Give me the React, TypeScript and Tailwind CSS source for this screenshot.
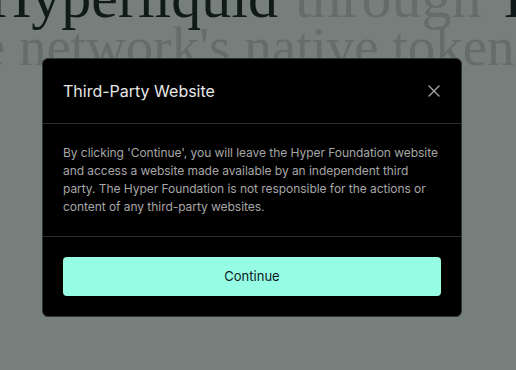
import React from "react"
import { X } from "lucide-react"

const ThirdPartyModal: React.FC = () => {
  return (
    <div className="relative h-[370px] w-[516px] overflow-hidden bg-[#777f7d]">
      {/* Page behind the overlay */}
      <div
        className="whitespace-nowrap leading-[50px]"
        style={{ fontFamily: '"Liberation Serif", "DejaVu Serif", serif' }}
      >
        <div className="-mt-[28px] -ml-[12px] text-[60px]">
          <span className="text-[#0f1a19]">Hyperliquid</span>
          <span className="ml-[17px] text-[#646d6b]">through</span>
          <span className="ml-[22px] text-[#0f1a19]">It</span>
        </div>
        <div className="-ml-[62px] text-[55px] text-[#646d6b]">the network's native token</div>
      </div>

      {/* Overlay + dialog */}
      <div className="absolute inset-0">
        <div
          className="mt-[58px] ml-[42px] w-[420px] rounded-md border border-[#333333] bg-black"
          style={{ fontFamily: 'Inter, "Liberation Sans", sans-serif' }}
        >
          <div className="flex items-center justify-between border-b border-[#2b2b2b] py-5 pr-[17px] pl-5">
            <h2 className="text-base leading-6 text-[#e8e8e8]">Third-Party Website</h2>
            <X className="h-5 w-5 text-[#a8a8a8]" strokeWidth={1.5} />
          </div>
          <div className="border-b border-[#2b2b2b] px-5 py-5">
            <p className="text-[12px] leading-[18px] tracking-[-0.05px] text-[#a6a6a6]">
              By clicking 'Continue', you will leave the Hyper Foundation website and access a
              website made available by an independent third party. The Hyper Foundation is not
              responsible for the actions or content of any third-party websites.
            </p>
          </div>
          <div className="p-5">
            <button className="flex h-[39px] w-full items-center justify-center rounded bg-[#97fce4] text-[13px] text-[#0d1a1c]">
              Continue
            </button>
          </div>
        </div>
      </div>
    </div>
  )
}

export default ThirdPartyModal
